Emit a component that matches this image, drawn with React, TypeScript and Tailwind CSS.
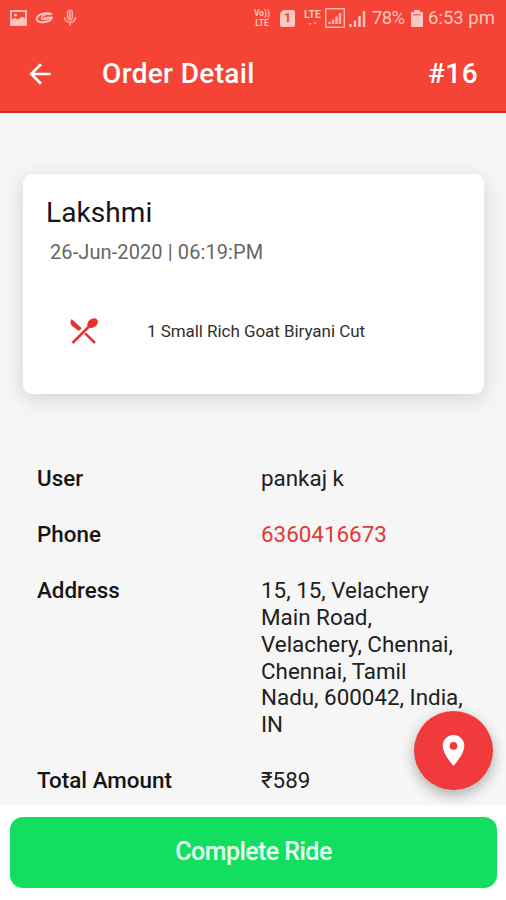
import { MdArrowBack, MdPlace } from 'react-icons/md'

const details = [
  { label: 'User', value: 'pankaj k', color: 'text-[#202020]' },
  { label: 'Phone', value: '6360416673', color: 'text-[#e23a35]' },
  {
    label: 'Address',
    value: '15, 15, Velachery Main Road, Velachery, Chennai, Chennai, Tamil Nadu, 600042, India, IN',
    color: 'text-[#202020]',
  },
  { label: 'Total Amount', value: '₹589', color: 'text-[#202020]' },
]

function StatusBar() {
  return (
    <div className="flex h-[36px] items-center justify-between pl-[10px] pr-[11px] text-[#fdc6bf]">
      <div className="flex items-center">
        <svg className="h-4 w-[17px]" viewBox="0 0 17 16" fill="none">
          <rect x="1" y="1" width="15" height="14" stroke="currentColor" strokeWidth="1.8" />
          <path d="M1 15V10L5 8L8 9.500L12 6.500L16 9V15Z" fill="currentColor" />
          <circle cx="5.500" cy="5" r="1.500" fill="currentColor" />
        </svg>
        <svg className="ml-2 h-3 w-[19px]" viewBox="0 0 19 12" fill="none" stroke="currentColor">
          <path d="M17 2.500C13 .2 5 1 2.300 5C0 9.300 5 11 10 10C14 9.200 16.500 7.500 16.800 5.500L8.500 6" strokeWidth="2" />
          <path d="M15 2.600C10 2 6 4 6.500 6.500C7 8 11 8 14 6" strokeWidth="1.200" />
        </svg>
        <svg className="ml-[9px] h-[18px] w-[14px] opacity-80" viewBox="0 0 14 18" fill="none" stroke="currentColor">
          <rect x="4.500" y="1" width="5" height="10" rx="2.500" strokeWidth="1.200" fill="currentColor" fillOpacity=".3" />
          <path d="M1.500 8C1.500 11.500 4 13.300 7 13.300S12.500 11.500 12.500 8M7 13V17M7 2V10" strokeWidth="1.500" />
        </svg>
      </div>
      <div className="flex items-center">
        <div className="w-[18px] text-center text-[8.5px] leading-[10px] font-bold">
          <div>Vo))</div>
          <div>LTE</div>
        </div>
        <div className="ml-[9px] flex h-[17px] w-[15px] items-center justify-center rounded-[2px] rounded-tl-[5px] bg-[#fdc6bf] text-[13px] font-bold text-[#f54335]">
          1
        </div>
        <div className="ml-2 w-[19px] text-center leading-none">
          <div className="text-[10.5px] leading-[9px] font-bold">LTE</div>
          <svg className="mx-auto mt-[2px] h-[5px] w-[9px] opacity-50" viewBox="0 0 9 5" fill="currentColor">
            <path d="M0 2H4L2 5ZM5 3H9L7 0Z" />
          </svg>
        </div>
        <svg className="ml-[3px] h-5 w-5" viewBox="0 0 20 20" fill="none">
          <rect x=".75" y=".75" width="18.500" height="18.500" stroke="currentColor" strokeWidth="1.300" />
          <path d="M4.500 16V14M8 16V11.500M11.500 16V8.500M15 16V5" stroke="currentColor" strokeWidth="2.600" strokeOpacity=".85" />
        </svg>
        <svg className="ml-1 h-[17px] w-[17px]" viewBox="0 0 17 17" fill="none" stroke="currentColor">
          <path d="M1.500 17V14" strokeWidth="2.400" />
          <path d="M6 17V10.500M10.500 17V6M15 17V1" strokeWidth="2.400" />
        </svg>
        <span className="ml-[6px] w-[33px] text-[18.5px] leading-none tracking-[-0.6px]">78%</span>
        <svg className="ml-[6px] h-[17px] w-3" viewBox="0 0 12 17" fill="currentColor">
          <path d="M3 0H9V2H12V17H0V2H3Z" />
          <path d="M2.500 4H9.500V5.500H2.500Z" fill="#f54335" fillOpacity=".7" />
        </svg>
        <span className="ml-[5px] w-[67px] text-[18.5px] leading-none whitespace-nowrap">6:53 pm</span>
      </div>
    </div>
  )
}

function CutleryIcon() {
  return (
    <svg className="ml-6 h-[27px] w-7 text-[#e5322e]" viewBox="0 0 28 27" fill="currentColor">
      <path d="M1.600 1L11.800 10.200L8.800 13L1.800 7.800Q-.8 4.500 1.600 1Z" />
      <ellipse cx="22.600" cy="5.200" rx="5.800" ry="4.300" transform="rotate(-38 22.600 5.200)" />
      <path d="M19 8.500L2.500 25M15.200 15.300L25 25" stroke="currentColor" strokeWidth="2.500" />
    </svg>
  )
}

export default function App() {
  return (
    <div className="relative flex h-[900px] w-[506px] flex-col overflow-hidden bg-[#f6f6f6] font-[Roboto,sans-serif]">
      <header className="h-[113px] border-b-2 border-[#d9281f] bg-[#f54335]">
        <StatusBar />
        <div className="flex h-[76px] items-center pr-7 pl-6 text-white">
          <MdArrowBack className="h-8 w-8" />
          <h1 className="ml-[46px] text-[28px] font-medium tracking-[0.35px]">Order Detail</h1>
          <span className="ml-auto text-[28px] font-medium tracking-[0.4px]">#16</span>
        </div>
      </header>

      <main className="flex-1 overflow-hidden">
        <section className="mr-[22px] ml-[23px] mt-[61px] h-[220px] rounded-[9px] bg-white pt-[22px] pl-[23px] shadow-[0_5px_22px_rgba(0,0,0,0.14)]">
          <h2 className="text-[28px] leading-[34px] tracking-[0.1px] text-[#151515]">Lakshmi</h2>
          <p className="mt-[9px] ml-1 text-[20px] leading-[26px] tracking-[0.1px] text-[#666666]">26-Jun-2020 | 06:19:PM</p>
          <div className="mt-[49px] flex h-[34px] items-center">
            <CutleryIcon />
            <span className="ml-[49px] pt-[2px] text-[17px] tracking-[-0.05px] text-[#303030]">1 Small Rich Goat Biryani Cut</span>
          </div>
        </section>

        <dl className="mt-[71px] space-y-[29.5px] pl-[37px] text-[22.4px] leading-[26.7px]">
          {details.map((item) => (
            <div key={item.label} className="flex">
              <dt className="w-[224px] font-medium text-[#151515]">{item.label}</dt>
              <dd className={`w-[206px] ${item.color}`}>{item.value}</dd>
            </div>
          ))}
        </dl>
      </main>

      <footer className="h-[95px] bg-white pt-3 pr-[9px] pl-[10px]">
        <button className="h-[71px] w-full rounded-[13px] bg-[#12df60] pb-[2px] text-[25px] font-medium tracking-[-0.55px] text-[#e9fff1]">
          Complete Ride
        </button>
      </footer>

      <button className="absolute top-[711px] right-[13px] flex h-[79px] w-[79px] items-center justify-center rounded-full bg-[#f03a3c] text-white shadow-[0_5px_14px_rgba(0,0,0,0.3)]">
        <MdPlace className="h-[37px] w-[37px]" />
      </button>
    </div>
  )
}
